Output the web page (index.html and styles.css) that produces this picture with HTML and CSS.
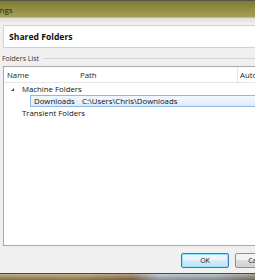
FILE: index.html
```html
<!DOCTYPE html>
<html lang="en">
<head>
    <meta charset="UTF-8">
    <meta name="viewport" content="width=device-width, initial-scale=1.0">
    <title>Settings</title>
    <link rel="stylesheet" href="styles.css">
</head>
<body>

    <div class="window">
        <!-- Title bar (left part of the window is off screen) -->
        <div class="titlebar"><span class="title">Settings</span></div>

        <div class="content">
            <div class="page-header">Shared Folders</div>

            <div class="group-label"><span>Folders List</span></div>

            <div class="list">
                <div class="list-head">
                    <div class="col col-name">Name</div>
                    <div class="col col-path">Path</div>
                    <div class="col col-auto">Auto-mount</div>
                </div>
                <div class="row">
                    <span class="arrow"></span>
                    <span>Machine Folders</span>
                </div>
                <div class="row row-child selected">
                    <span class="cell-name">Downloads</span>
                    <span class="cell-path">C:\Users\Chris\Downloads</span>
                </div>
                <div class="row">
                    <span>Transient Folders</span>
                </div>
            </div>

            <div class="buttons">
                <button class="btn btn-default">OK</button>
                <button class="btn">Cancel</button>
            </div>
        </div>
    </div>

    <div class="taskbar"></div>

</body>
</html>
```

FILE: styles.css
```css
body {
    margin: 0;
    width: 255px;
    height: 280px;
    overflow: hidden;
    background-color: #f0f0f0;
    font-family: "Open Sans", "Noto Sans", sans-serif;
    font-size: 7.8px;
    color: #111;
}
.window {
    height: 273px;
    display: flex;
    flex-direction: column;
}
.titlebar {
    height: 18px;
    flex-shrink: 0;
    box-sizing: border-box;
    border-top: 1px solid #55553e;
    border-bottom: 1px solid #c4c290;
    background: linear-gradient(#7f7a36, #8e8a3e 40%, #a39f55);
    display: flex;
    align-items: center;
    overflow: hidden;
}
.title {
    margin-left: -17px;
    font-size: 8px;
    color: #2a2a1a;
}
.content {
    flex: 1;
    display: flex;
    flex-direction: column;
    border-top: 1px solid #d8d8d8;
    background: linear-gradient(#e6e6e6 3px, #f0f0f0 3px);
    padding: 6px 0 0 3px;
}
.page-header {
    height: 21px;
    background-color: #fff;
    border: 1px solid #d2d2d2;
    border-right: none;
    display: flex;
    align-items: center;
    padding-left: 5px;
    font-weight: bold;
    font-size: 8.6px;
    color: #111;
}
.group-label {
    margin: 5px 0 0 -1px;
    height: 11px;
    display: flex;
    align-items: center;
    gap: 4px;
    color: #333;
    font-size: 7px;
}
.group-label::after {
    content: "";
    flex: 1;
    border-top: 1px solid #d5d5d5;
}
.list {
    margin-top: 2px;
    height: 178px;
    background-color: #fff;
    border: 1px solid #a9a9a9;
    border-right: none;
}
.list-head {
    height: 15px;
    display: flex;
    border-bottom: 1px solid #e5e5e5;
    align-items: center;
    color: #222;
}
.col {
    flex-shrink: 0;
    height: 100%;
    display: flex;
    align-items: center;
    white-space: nowrap;
}
.col-name {
    width: 73px;
    padding-left: 3px;
}
.col-path {
    width: 157px;
    border-right: 1px solid #e5e5e5;
}
.col-auto {
    padding-left: 2px;
}
.row {
    height: 12px;
    display: flex;
    align-items: center;
    padding-left: 18px;
    white-space: nowrap;
}
.arrow {
    flex-shrink: 0;
    width: 0;
    height: 0;
    margin-left: -11px;
    margin-right: 8px;
    border-left: 3px solid transparent;
    border-bottom: 3px solid #444;
}
.row-child {
    margin-left: 26px;
    padding-left: 3px;
}
.selected {
    height: 10px;
    background: linear-gradient(#f2f7fd, #dfecfb);
    border: 1px solid #8fb8e6;
    border-right: none;
}
.cell-name {
    flex-shrink: 0;
    width: 48px;
}
.buttons {
    margin-top: 7px;
    display: flex;
    gap: 6px;
    padding-left: 178px;
}
.btn {
    flex-shrink: 0;
    width: 48px;
    height: 15px;
    padding: 0;
    font-family: "Open Sans", "Noto Sans", sans-serif;
    font-size: 7px;
    color: #111;
    border: 1px solid #8e8f8f;
    border-radius: 2px;
    background: linear-gradient(#f3f3f3 50%, #dddddd 50%, #d1d1d1);
}
.btn-default {
    border-color: #3c7fb1;
    box-shadow: inset 0 0 0 1px #8ee0fb;
    background: linear-gradient(#eaf6fd 50%, #d6ebf7 50%, #c2e3f5);
}
.taskbar {
    height: 7px;
    border-top: 1px solid #5a4a24;
    background:
        linear-gradient(rgba(255, 255, 255, 0.35), rgba(0, 0, 0, 0.25)),
        linear-gradient(90deg, #9c8550, #a78c55 30%, #8c6a40 52%, #a9b3c4 62%, #9ea6b3 85%, #7f7a5e);
}
```
